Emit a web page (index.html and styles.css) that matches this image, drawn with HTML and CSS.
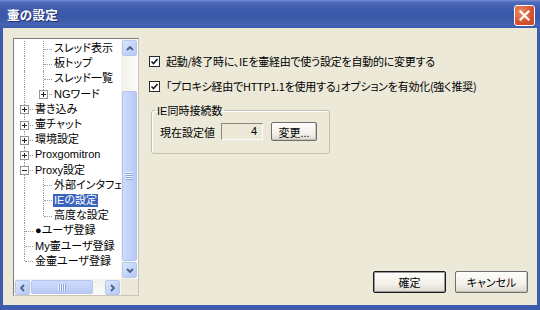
FILE: index.html
```html
<!DOCTYPE html>
<html lang="ja">
  <head>
    <meta charset="utf-8" />
    <title>壷の設定</title>
    <meta name="viewport" content="width=device-width, initial-scale=1" />
    <link rel="stylesheet" href="styles.css">
  </head>
  <body>
    <div class="window">
      <div class="titlebar">
        <span class="title">壷の設定</span>
        <button class="close" aria-label="閉じる">
          <svg width="11" height="11" viewBox="0 0 11 11">
            <path d="M1.5 1.5 L9.5 9.5 M9.5 1.5 L1.5 9.5" stroke="#fff" stroke-width="2.2" stroke-linecap="square" />
          </svg>
        </button>
      </div>
      <div class="frame">
        <div class="client">
          <div class="tree">
            <div class="tree-view">
              <div class="row"><span class="cell v"></span><span class="cell t"></span><span class="label">スレッド表示</span></div>
              <div class="row"><span class="cell v"></span><span class="cell t"></span><span class="label">板トップ</span></div>
              <div class="row"><span class="cell v"></span><span class="cell t"></span><span class="label">スレッド一覧</span></div>
              <div class="row"><span class="cell v"></span><span class="cell l"><i class="expander plus"></i></span><span class="label">NGワード</span></div>
              <div class="row"><span class="cell t"><i class="expander plus"></i></span><span class="label">書き込み</span></div>
              <div class="row"><span class="cell t"><i class="expander plus"></i></span><span class="label">壷チャット</span></div>
              <div class="row"><span class="cell t"><i class="expander plus"></i></span><span class="label">環境設定</span></div>
              <div class="row"><span class="cell t"><i class="expander plus"></i></span><span class="label">Proxgomitron</span></div>
              <div class="row"><span class="cell t"><i class="expander"></i></span><span class="label">Proxy設定</span></div>
              <div class="row"><span class="cell v"></span><span class="cell t"></span><span class="label">外部インタフェース</span></div>
              <div class="row"><span class="cell v"></span><span class="cell t"></span><span class="label selected">IEの設定</span></div>
              <div class="row"><span class="cell v"></span><span class="cell l"></span><span class="label">高度な設定</span></div>
              <div class="row"><span class="cell t"></span><span class="label">●ユーザ登録</span></div>
              <div class="row"><span class="cell t"></span><span class="label">My壷ユーザ登録</span></div>
              <div class="row"><span class="cell l"></span><span class="label">金壷ユーザ登録</span></div>
            </div>

            <div class="vscroll">
              <span class="sb-btn">
                <svg width="8" height="5" viewBox="0 0 8 5"><polyline points="1,4 4,1 7,4" fill="none" stroke="#4d6185" stroke-width="1.8" /></svg>
              </span>
              <span class="sb-track">
                <span class="sb-thumb v-thumb"><span class="grip"></span></span>
              </span>
              <span class="sb-btn">
                <svg width="8" height="5" viewBox="0 0 8 5"><polyline points="1,1 4,4 7,1" fill="none" stroke="#4d6185" stroke-width="1.8" /></svg>
              </span>
            </div>

            <div class="hscroll">
              <span class="sb-btn">
                <svg width="5" height="8" viewBox="0 0 5 8"><polyline points="4,1 1,4 4,7" fill="none" stroke="#4d6185" stroke-width="1.8" /></svg>
              </span>
              <span class="sb-track">
                <span class="sb-thumb h-thumb"><span class="grip"></span></span>
              </span>
              <span class="sb-btn">
                <svg width="5" height="8" viewBox="0 0 5 8"><polyline points="1,1 4,4 1,7" fill="none" stroke="#4d6185" stroke-width="1.8" /></svg>
              </span>
            </div>
            <div class="corner"></div>
          </div>

          <div class="panel">
            <div class="options">
              <label class="check">
                <span class="box">
                  <svg width="9" height="9" viewBox="0 0 9 9"><polyline points="1.5,4.5 3.5,6.5 7.5,2" fill="none" stroke="#1a1a1a" stroke-width="1.6" /></svg>
                </span>
                起動/終了時に、IEを壷経由で使う設定を自動的に変更する
              </label>
              <label class="check">
                <span class="box">
                  <svg width="9" height="9" viewBox="0 0 9 9"><polyline points="1.5,4.5 3.5,6.5 7.5,2" fill="none" stroke="#1a1a1a" stroke-width="1.6" /></svg>
                </span>
                「プロキシ経由でHTTP1.1を使用する」オプションを有効化(強く推奨)
              </label>

              <fieldset class="group">
                <legend>IE同時接続数</legend>
                <div class="conn-row">
                  <span>現在設定値</span>
                  <span class="value">4</span>
                  <button class="btn small">変更...</button>
                </div>
              </fieldset>
            </div>

            <div class="actions">
              <button class="btn default">確定</button>
              <button class="btn">キャンセル</button>
            </div>
          </div>
        </div>
      </div>
    </div>
  </body>
</html>
```

FILE: styles.css
```css
html {
  background: #3e5cad;
}
body {
  margin: 0;
  font-family: 'Liberation Sans', 'Noto Sans CJK JP', sans-serif;
  font-size: 11px;
  font-feature-settings: 'palt';
  color: #000;
}
.window {
  width: 540px;
  height: 310px;
  display: flex;
  flex-direction: column;
}
.titlebar {
  height: 28px;
  display: flex;
  align-items: center;
  justify-content: space-between;
  padding: 0 5px 0 7px;
  box-sizing: border-box;
  background: linear-gradient(#7790d6 0, #4f6dbb 2px, #3d59a9 10px, #3c58a8 18px, #4664b3 25px, #3e5cad 28px);
}
.title {
  color: #fff;
  font-weight: bold;
  font-size: 12.5px;
  letter-spacing: 0.3px;
  text-shadow: 1px 1px 0 #1e2f6e;
  padding-top: 1px;
}
.close {
  width: 21px;
  height: 21px;
  padding: 0;
  margin-top: 2px;
  border: 1px solid #fff;
  border-radius: 3px;
  background: radial-gradient(circle at 30% 30%, #e98c67, #d5532c 60%, #c24420);
  display: flex;
  align-items: center;
  justify-content: center;
}
.frame {
  flex: 1;
  display: flex;
  padding: 0 3px 5px;
  background: #3e5cad;
}
.client {
  flex: 1;
  display: flex;
  padding: 10px 9px 9px 10px;
  background: #ece9d8;
}

/* tree */
.tree {
  width: 126px;
  box-sizing: border-box;
  display: grid;
  grid-template-columns: 1fr 17px;
  grid-template-rows: 1fr 16px;
  border: 1px solid #7b7b7b;
  border-right-color: #c9c6b8;
  border-bottom-color: #c9c6b8;
  background: #fff;
}
.tree-view {
  overflow: hidden;
  padding-top: 2px;
}
.row {
  display: flex;
  height: 15.2px;
  align-items: center;
  white-space: nowrap;
}
.cell {
  flex: none;
  width: 19px;
  height: 100%;
  position: relative;
}
.cell.v::before,
.cell.t::before,
.cell.l::before {
  content: '';
  position: absolute;
  left: 10px;
  top: 0;
  bottom: 0;
  border-left: 1px dotted #9a9a9a;
}
.cell.l::before {
  bottom: 50%;
}
.cell.t::after,
.cell.l::after {
  content: '';
  position: absolute;
  left: 11px;
  right: 0;
  top: 50%;
  border-top: 1px dotted #9a9a9a;
}
.expander {
  position: absolute;
  z-index: 1;
  left: 6px;
  top: 50%;
  margin-top: -4px;
  width: 7px;
  height: 7px;
  border: 1px solid #8e9696;
  background: linear-gradient(#222, #222) center / 5px 1px no-repeat, #fff;
}
.expander.plus {
  background: linear-gradient(#222, #222) center / 5px 1px no-repeat,
    linear-gradient(#222, #222) center / 1px 5px no-repeat, #fff;
}
.label {
  padding: 0 1px;
  margin-left: 1px;
  line-height: 13px;
}
.label.selected {
  background: #3a63bd;
  color: #fff;
}

/* scrollbars */
.vscroll,
.hscroll {
  display: flex;
  background: linear-gradient(90deg, #f3f2ec, #fbfbf8);
}
.vscroll {
  flex-direction: column;
}
.hscroll {
  background: linear-gradient(#f3f2ec, #fbfbf8);
}
.sb-btn {
  flex: none;
  width: 15px;
  height: 15px;
  margin: 1px;
  border-radius: 2px;
  border: 1px solid #b6c7ee;
  box-sizing: border-box;
  background: linear-gradient(135deg, #dce6fd, #c2d3f9 60%, #b7c9f4);
  display: flex;
  align-items: center;
  justify-content: center;
}
.vscroll .sb-btn {
  height: 16px;
}
.sb-track {
  flex: 1;
  display: flex;
}
.vscroll .sb-track {
  flex-direction: column;
  justify-content: flex-end;
}
.sb-thumb {
  box-sizing: border-box;
  border: 1px solid #b3c5ee;
  border-radius: 2px;
  background: linear-gradient(90deg, #cddbfc, #c0d1f9 60%, #b6c8f4);
  display: flex;
  align-items: center;
  justify-content: center;
}
.v-thumb {
  height: 170px;
  margin: 0 1px;
}
.h-thumb {
  width: 62px;
  margin: 1px 0;
  background: linear-gradient(#cddbfc, #c0d1f9 60%, #b6c8f4);
}
.grip {
  width: 7px;
  height: 8px;
  background: repeating-linear-gradient(#eef3fe 0 1px, #8ea5d9 1px 2px);
}
.h-thumb .grip {
  width: 8px;
  height: 7px;
  background: repeating-linear-gradient(90deg, #eef3fe 0 1px, #8ea5d9 1px 2px);
}
.corner {
  background: #ece9d8;
}

/* right panel */
.panel {
  flex: 1;
  margin-left: 10px;
  display: flex;
  flex-direction: column;
  justify-content: space-between;
}
.options {
  padding-top: 16px;
}
.check {
  display: flex;
  align-items: center;
  gap: 6px;
  height: 14px;
  margin-bottom: 11px;
  white-space: nowrap;
  font-family: 'Noto Sans CJK JP', sans-serif;
  letter-spacing: -0.25px;
}
.box {
  width: 11px;
  height: 11px;
  box-sizing: border-box;
  border: 1px solid #2a2a2a;
  background: #fff;
  display: flex;
  align-items: center;
  justify-content: center;
}
.group {
  width: 179px;
  box-sizing: border-box;
  margin: -2px 0 0 2px;
  padding: 4px 8px 12px;
  border: 1px solid #c3c0b0;
  border-radius: 3px;
  box-shadow: inset 1px 1px 0 #fff;
}
.group legend {
  padding: 0 2px;
  margin-left: -5px;
}
.conn-row {
  display: flex;
  align-items: center;
}
.value {
  width: 42px;
  height: 17px;
  box-sizing: border-box;
  margin-left: 6px;
  padding-right: 5px;
  text-align: right;
  line-height: 15px;
  border: 1px solid #8b8878;
  border-right-color: #fff;
  border-bottom-color: #fff;
}
.btn {
  font: inherit;
  padding: 0;
  width: 73px;
  height: 22px;
  border: 1px solid #6f6f6f;
  border-radius: 2px;
  background: linear-gradient(#fdfdfb, #f3f1ea 60%, #dcd8cc);
  box-shadow: inset -1px -1px 0 #c6c2b4;
}
.btn.small {
  width: 46px;
  height: 19px;
  margin-left: 8px;
}
.btn.default {
  border-color: #1a1a1a;
  box-shadow: inset 0 0 0 1px #9a9a9a;
}
.actions {
  display: flex;
  justify-content: flex-end;
  gap: 9px;
  margin-bottom: 3px;
}
```
